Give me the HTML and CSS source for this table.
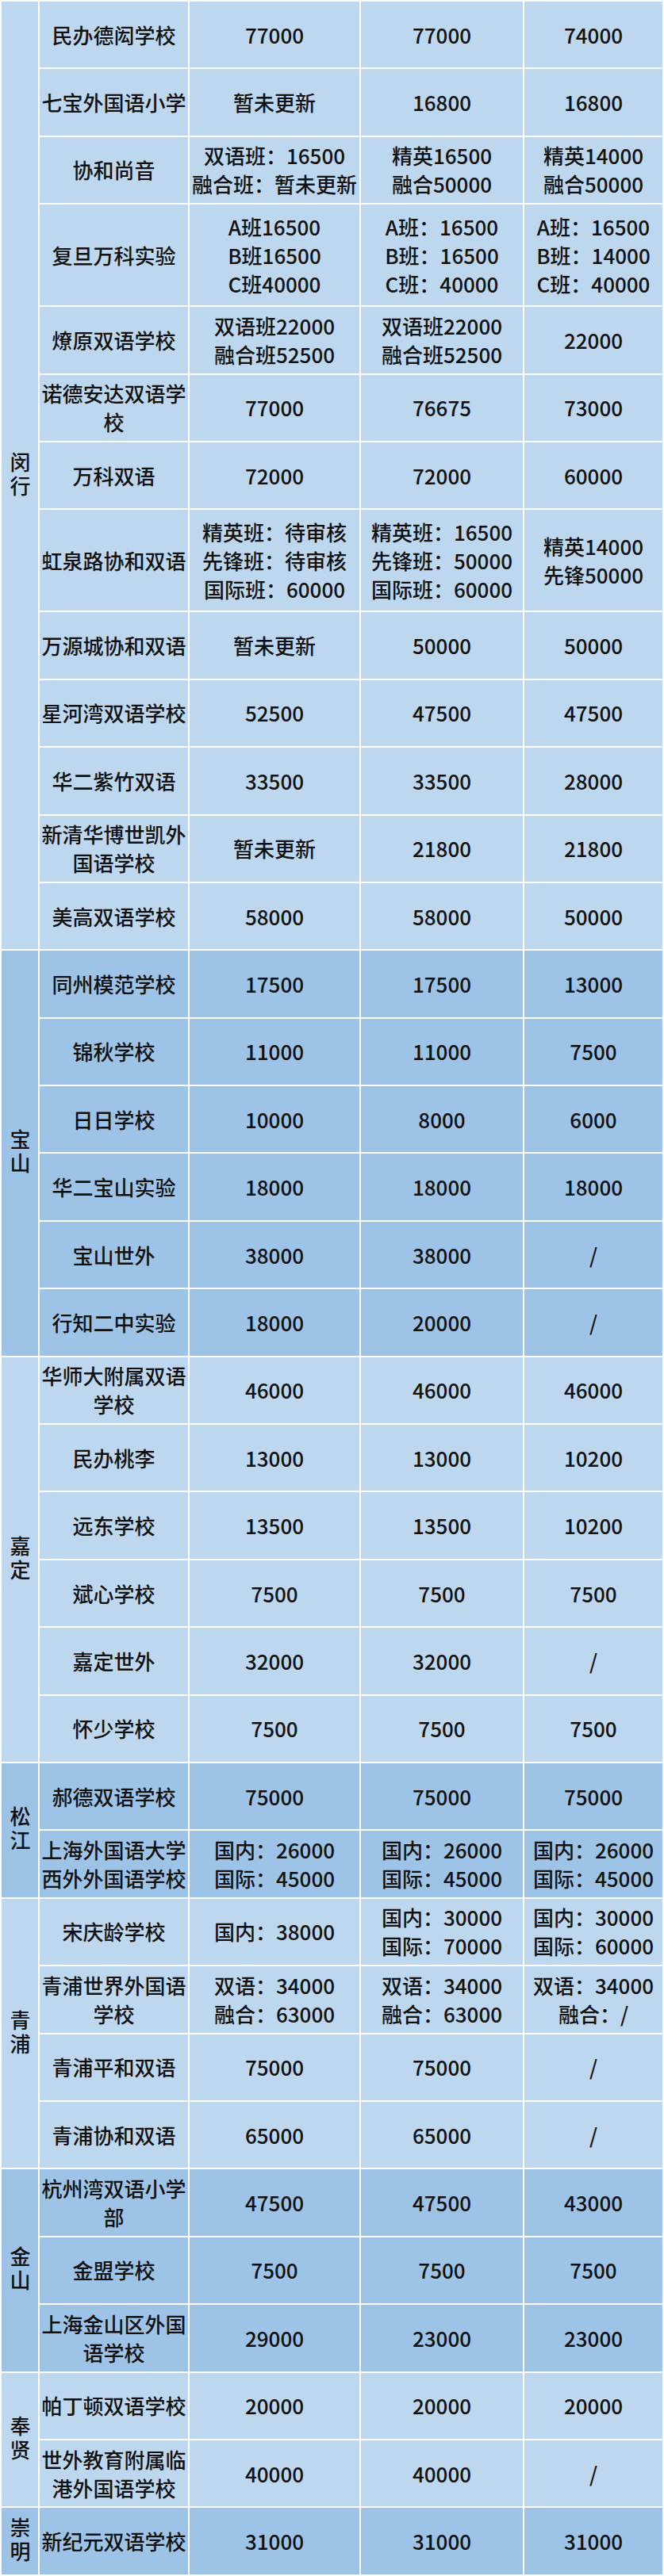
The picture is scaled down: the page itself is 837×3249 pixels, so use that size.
FILE: index.html
```html
<!DOCTYPE html>
<html lang="zh-CN">
<head>
<meta charset="utf-8">
<title>学费表</title>
<link rel="stylesheet" href="styles.css">
</head>
<body>
<table class="fees">
<colgroup>
<col class="c-district"><col class="c-school"><col class="c-fee1"><col class="c-fee2"><col class="c-fee3">
</colgroup>
<tbody class="light">
<tr><td class="district" rowspan="13"><span class="dname">闵行</span></td><td>民办德闳学校</td><td>77000</td><td>77000</td><td>74000</td></tr>
<tr><td>七宝外国语小学</td><td>暂未更新</td><td>16800</td><td>16800</td></tr>
<tr><td>协和尚音</td><td>双语班：16500<br>融合班：暂未更新</td><td>精英16500<br>融合50000</td><td>精英14000<br>融合50000</td></tr>
<tr class="tall"><td>复旦万科实验</td><td>A班16500<br>B班16500<br>C班40000</td><td>A班：16500<br>B班：16500<br>C班：40000</td><td>A班：16500<br>B班：14000<br>C班：40000</td></tr>
<tr><td>燎原双语学校</td><td>双语班22000<br>融合班52500</td><td>双语班22000<br>融合班52500</td><td>22000</td></tr>
<tr><td>诺德安达双语学校</td><td>77000</td><td>76675</td><td>73000</td></tr>
<tr><td>万科双语</td><td>72000</td><td>72000</td><td>60000</td></tr>
<tr class="tall"><td>虹泉路协和双语</td><td>精英班：待审核<br>先锋班：待审核<br>国际班：60000</td><td>精英班：16500<br>先锋班：50000<br>国际班：60000</td><td>精英14000<br>先锋50000</td></tr>
<tr><td>万源城协和双语</td><td>暂未更新</td><td>50000</td><td>50000</td></tr>
<tr><td>星河湾双语学校</td><td>52500</td><td>47500</td><td>47500</td></tr>
<tr><td>华二紫竹双语</td><td>33500</td><td>33500</td><td>28000</td></tr>
<tr><td>新清华博世凯外国语学校</td><td>暂未更新</td><td>21800</td><td>21800</td></tr>
<tr><td>美高双语学校</td><td>58000</td><td>58000</td><td>50000</td></tr>
</tbody>
<tbody class="dark">
<tr><td class="district" rowspan="6"><span class="dname">宝山</span></td><td>同州模范学校</td><td>17500</td><td>17500</td><td>13000</td></tr>
<tr><td>锦秋学校</td><td>11000</td><td>11000</td><td>7500</td></tr>
<tr><td>日日学校</td><td>10000</td><td>8000</td><td>6000</td></tr>
<tr><td>华二宝山实验</td><td>18000</td><td>18000</td><td>18000</td></tr>
<tr><td>宝山世外</td><td>38000</td><td>38000</td><td>/</td></tr>
<tr><td>行知二中实验</td><td>18000</td><td>20000</td><td>/</td></tr>
</tbody>
<tbody class="light">
<tr><td class="district" rowspan="6"><span class="dname">嘉定</span></td><td>华师大附属双语学校</td><td>46000</td><td>46000</td><td>46000</td></tr>
<tr><td>民办桃李</td><td>13000</td><td>13000</td><td>10200</td></tr>
<tr><td>远东学校</td><td>13500</td><td>13500</td><td>10200</td></tr>
<tr><td>斌心学校</td><td>7500</td><td>7500</td><td>7500</td></tr>
<tr><td>嘉定世外</td><td>32000</td><td>32000</td><td>/</td></tr>
<tr><td>怀少学校</td><td>7500</td><td>7500</td><td>7500</td></tr>
</tbody>
<tbody class="dark">
<tr><td class="district" rowspan="2"><span class="dname">松江</span></td><td>郝德双语学校</td><td>75000</td><td>75000</td><td>75000</td></tr>
<tr><td>上海外国语大学西外外国语学校</td><td>国内：26000<br>国际：45000</td><td>国内：26000<br>国际：45000</td><td>国内：26000<br>国际：45000</td></tr>
</tbody>
<tbody class="light">
<tr><td class="district" rowspan="4"><span class="dname">青浦</span></td><td>宋庆龄学校</td><td>国内：38000</td><td>国内：30000<br>国际：70000</td><td>国内：30000<br>国际：60000</td></tr>
<tr><td>青浦世界外国语学校</td><td>双语：34000<br>融合：63000</td><td>双语：34000<br>融合：63000</td><td>双语：34000<br>融合：/</td></tr>
<tr><td>青浦平和双语</td><td>75000</td><td>75000</td><td>/</td></tr>
<tr><td>青浦协和双语</td><td>65000</td><td>65000</td><td>/</td></tr>
</tbody>
<tbody class="dark">
<tr><td class="district" rowspan="3"><span class="dname">金山</span></td><td>杭州湾双语小学部</td><td>47500</td><td>47500</td><td>43000</td></tr>
<tr><td>金盟学校</td><td>7500</td><td>7500</td><td>7500</td></tr>
<tr><td>上海金山区外国语学校</td><td>29000</td><td>23000</td><td>23000</td></tr>
</tbody>
<tbody class="light">
<tr><td class="district" rowspan="2"><span class="dname">奉贤</span></td><td>帕丁顿双语学校</td><td>20000</td><td>20000</td><td>20000</td></tr>
<tr><td>世外教育附属临港外国语学校</td><td>40000</td><td>40000</td><td>/</td></tr>
</tbody>
<tbody class="dark">
<tr><td class="district"><span class="dname">崇明</span></td><td>新纪元双语学校</td><td>31000</td><td>31000</td><td>31000</td></tr>
</tbody>
</table>
</body>
</html>
```

FILE: styles.css
```css
html, body {
  margin: 0;
  padding: 0;
  background: #ffffff;
}

.fees {
  width: 837px;
  table-layout: fixed;
  border-collapse: separate;
  border-spacing: 2px;
  background: #ffffff;
  font-family: "Noto Sans CJK SC", "Noto Sans", sans-serif;
  font-size: 26px;
  font-weight: 500;
  line-height: 36px;
  color: #111111;
}

.c-district { width: 46px; }
.c-school { width: 187px; }
.c-fee1 { width: 214px; }
.c-fee2 { width: 204px; }
.c-fee3 { width: 174px; }

.fees tr { height: 83.4px; }
.fees tr.tall { height: 127px; }

.fees td {
  padding: 0;
  text-align: center;
  vertical-align: middle;
  white-space: normal;
  word-break: break-all;
}

.light td { background: #bdd7ee; }
.dark td { background: #9dc3e6; }

.fees td.district {
  line-height: 30px;
}

.dname {
  display: inline-block;
  writing-mode: vertical-rl;
  text-orientation: upright;
  letter-spacing: 4px;
  line-height: 30px;
  padding-top: 4px;
}
```
